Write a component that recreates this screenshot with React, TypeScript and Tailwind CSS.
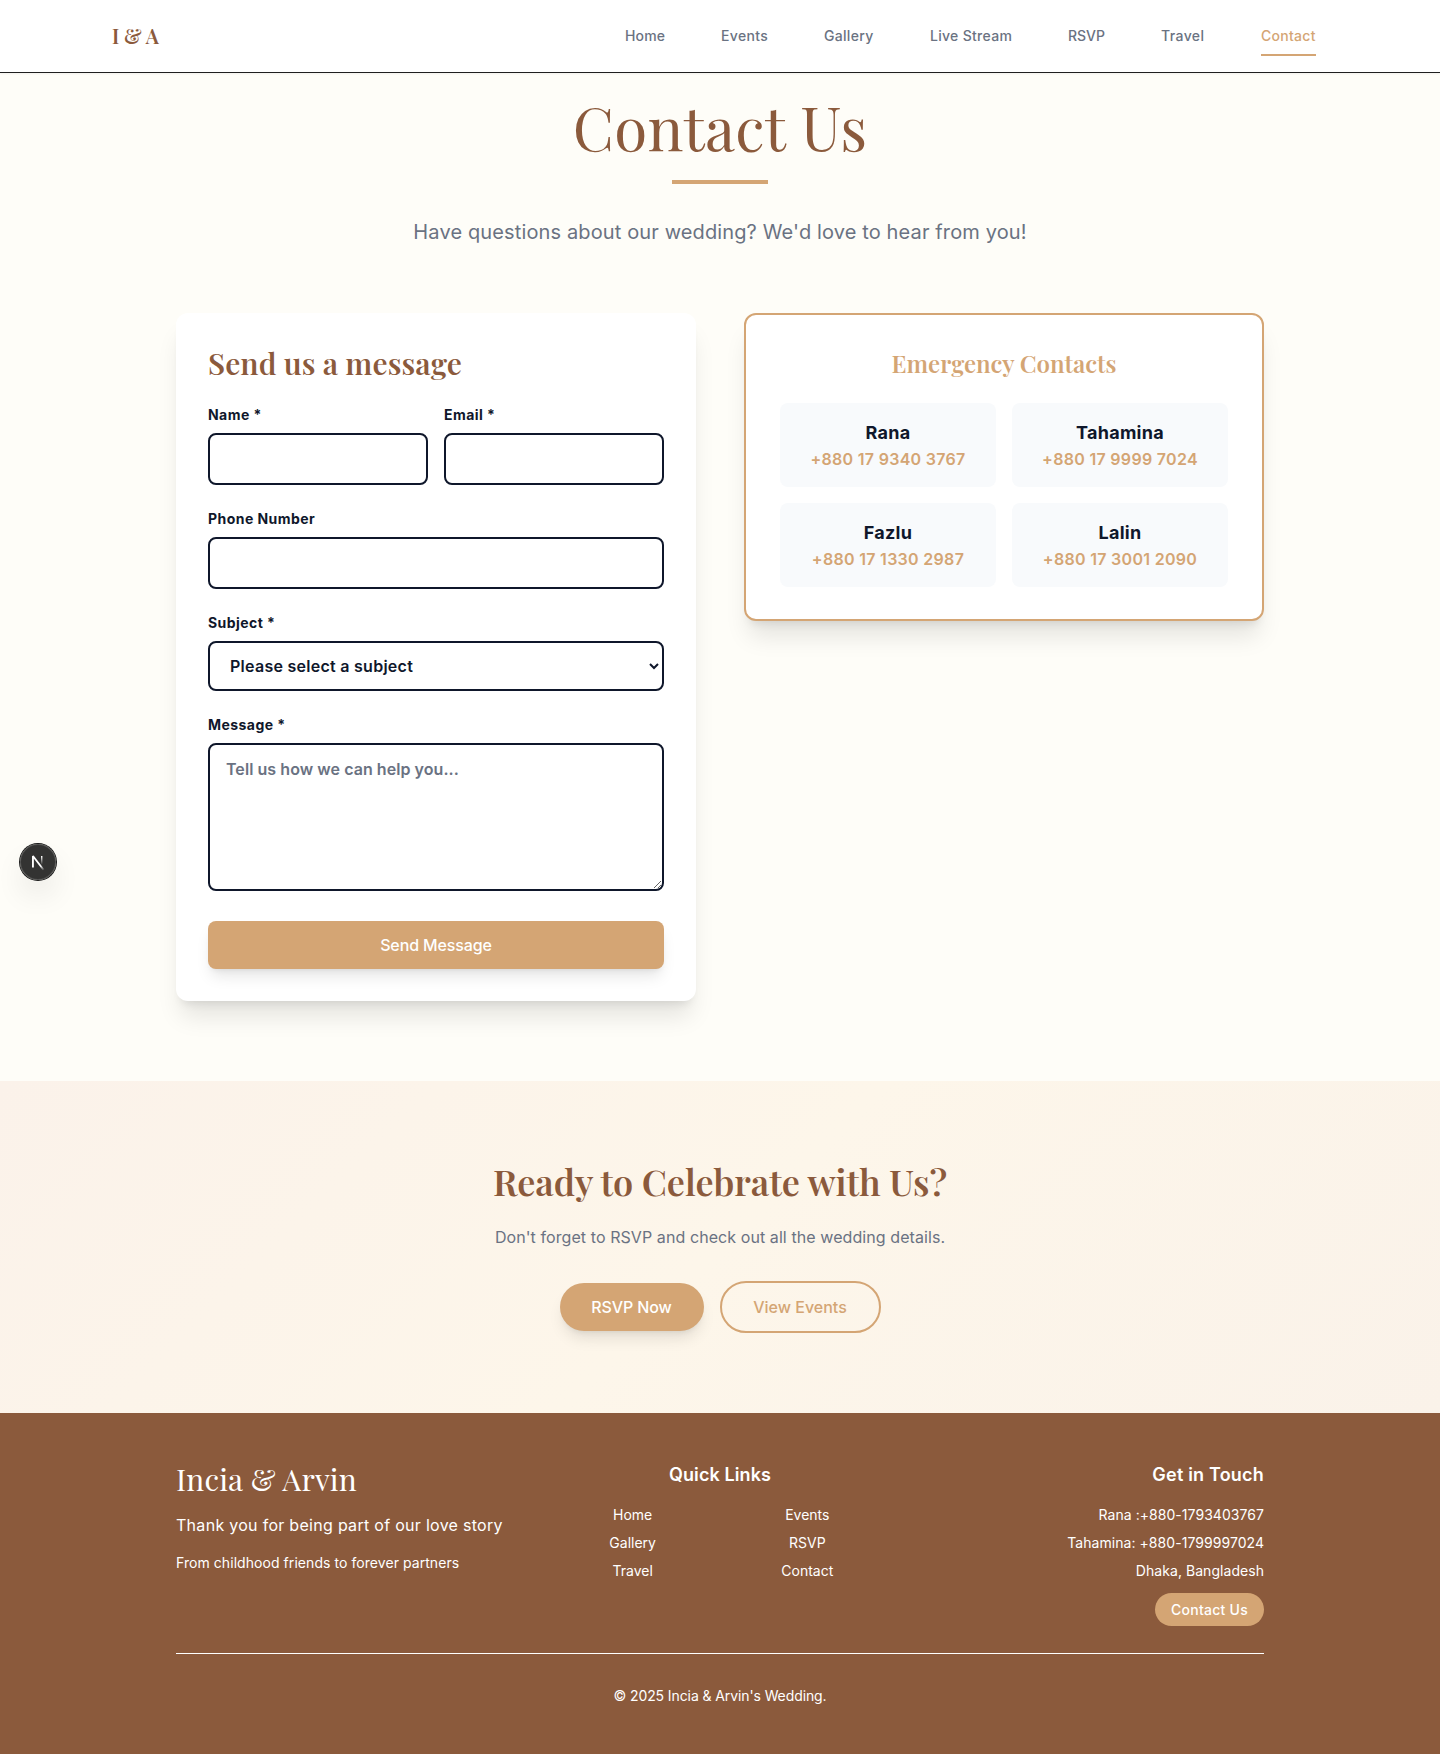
const serif = "font-['Playfair_Display',serif]";

const navItems = [
  { label: "Home", className: "w-10 tracking-[0.15px]" },
  { label: "Events", className: "w-[47px] tracking-[0.35px]" },
  { label: "Gallery", className: "w-[50px] tracking-[0.3px]" },
  { label: "Live Stream", className: "w-[82px] tracking-[0.3px]" },
  { label: "RSVP", className: "w-[37px]" },
  { label: "Travel", className: "w-11 tracking-[0.4px]" },
  { label: "Contact", className: "w-[55px] tracking-[0.28px]", active: true },
];

const contacts = [
  { name: "Rana", phone: "+880 17 9340 3767" },
  { name: "Tahamina", phone: "+880 17 9999 7024" },
  { name: "Fazlu", phone: "+880 17 1330 2987" },
  { name: "Lalin", phone: "+880 17 3001 2090" },
];

const quickLinks = ["Home", "Events", "Gallery", "RSVP", "Travel", "Contact"];

const labelClass = "mb-2 block text-sm font-bold tracking-[0.45px] text-slate-900";
const fieldClass =
  "block w-full rounded-lg border-2 border-slate-900 bg-white px-4 py-3 text-base font-semibold text-slate-900";

function Header() {
  return (
    <header className="relative h-[73px] border-b border-[#1f1f1f] bg-white shadow-[0_1px_2px_rgba(0,0,0,0.05)]">
      <div className="mx-auto flex h-full max-w-7xl items-center justify-between pl-8 pr-11">
        <a className={`${serif} text-xl font-semibold text-[#8B5A3C]`}>I &amp; A</a>
        <nav className="flex gap-14">
          {navItems.map((item) => (
            <a
              key={item.label}
              className={`border-y-2 border-t-transparent py-2 text-sm font-medium whitespace-nowrap ${item.className} ${
                item.active ? "border-b-[#D4A574] text-[#D4A574]" : "border-b-transparent text-gray-500"
              }`}
            >
              {item.label}
            </a>
          ))}
        </nav>
      </div>
    </header>
  );
}

function ContactForm() {
  return (
    <form className="rounded-xl bg-white p-8 shadow-xl">
      <h2 className={`${serif} mb-6 text-3xl font-semibold tracking-[0.1px] text-[#8B5A3C]`}>Send us a message</h2>
      <div className="space-y-6">
        <div className="grid grid-cols-2 gap-4">
          <div>
            <label className={labelClass}>Name *</label>
            <input className={fieldClass} type="text" />
          </div>
          <div>
            <label className={labelClass}>Email *</label>
            <input className={fieldClass} type="email" />
          </div>
        </div>
        <div>
          <label className={labelClass}>Phone Number</label>
          <input className={fieldClass} type="tel" />
        </div>
        <div>
          <label className={labelClass}>Subject *</label>
          <select className={`${fieldClass} h-[50px] tracking-[0.27px]`}>
            <option>Please select a subject</option>
          </select>
        </div>
        <div>
          <label className={labelClass}>Message *</label>
          <textarea
            className={`${fieldClass} h-[148px] resize-y tracking-[0.06px] placeholder:text-gray-500`}
            placeholder="Tell us how we can help you..."
          />
        </div>
      </div>
      <button
        type="button"
        className="mt-[30px] h-12 w-full rounded-lg bg-[#D4A574] text-base font-medium tracking-[-0.12px] text-white shadow-lg"
      >
        Send Message
      </button>
    </form>
  );
}

function EmergencyContacts() {
  return (
    <section className="self-start rounded-xl border-2 border-[#D4A574] bg-white p-8 text-center shadow-xl">
      <h3 className={`${serif} mb-6 text-2xl font-semibold text-[#D4A574]`}>Emergency Contacts</h3>
      <div className="mx-auto grid max-w-md grid-cols-2 gap-4">
        {contacts.map((contact) => (
          <div key={contact.name} className="rounded-lg bg-slate-50 p-4">
            <p className="text-lg font-bold tracking-[0.25px] text-slate-900">{contact.name}</p>
            <p className="text-base font-semibold tracking-[0.3px] text-[#D4A574]">{contact.phone}</p>
          </div>
        ))}
      </div>
    </section>
  );
}

function CallToAction() {
  return (
    <section className="bg-[linear-gradient(135deg,#fbf2ea,#fdf6ea_50%,#faf2e9)] py-20 text-center">
      <h2 className={`${serif} mb-6 text-4xl font-semibold tracking-[-0.05px] text-[#8B5A3C]`}>
        Ready to Celebrate with Us?
      </h2>
      <p className="mb-8 text-base tracking-[0.08px] text-gray-500">
        Don't forget to RSVP and check out all the wedding details.
      </p>
      <div className="flex items-center justify-center gap-4">
        <a className="w-36 rounded-full bg-[#D4A574] py-3 text-base font-medium tracking-[-0.12px] text-white shadow-lg">
          RSVP Now
        </a>
        <a className="w-[161px] rounded-full border-2 border-[#D4A574] py-3 text-base font-medium text-[#D4A574]">
          View Events
        </a>
      </div>
    </section>
  );
}

function Footer() {
  return (
    <footer className="bg-[#8B5A3C] py-12 text-white">
      <div className="mx-auto max-w-[1088px]">
        <div className="grid h-[192px] grid-cols-3 gap-8">
          <div>
            <p className={`${serif} mb-4 text-3xl tracking-[0.16px]`}>Incia &amp; Arvin</p>
            <p className="mb-4 text-base tracking-[0.29px] whitespace-nowrap">Thank you for being part of our love story</p>
            <p className="text-sm tracking-[0.06px]">From childhood friends to forever partners</p>
          </div>
          <div className="text-center">
            <h4 className="mb-4 text-lg font-semibold tracking-[0.1px]">Quick Links</h4>
            <div className="grid grid-cols-2 gap-2 text-sm">
              {quickLinks.map((link) => (
                <a key={link}>{link}</a>
              ))}
            </div>
          </div>
          <div className="flex flex-col items-end">
            <h4 className="mb-4 text-lg font-semibold tracking-[0.2px]">Get in Touch</h4>
            <div className="space-y-2 text-right text-sm tracking-[0.05px]">
              <p>Rana :+880-1793403767</p>
              <p>Tahamina: +880-1799997024</p>
              <p>Dhaka, Bangladesh</p>
            </div>
            <a className="mt-3 flex h-[33px] w-[109px] items-center justify-center rounded-full bg-[#D4A574] text-sm font-medium tracking-[0.27px]">
              Contact Us
            </a>
          </div>
        </div>
        <div className="border-t border-white pt-8 text-center text-sm">
          <p className="tracking-[-0.1px]">© 2025 Incia &amp; Arvin's Wedding.</p>
        </div>
      </div>
    </footer>
  );
}

function DevIndicator() {
  return (
    <div className="fixed top-[844px] left-5 size-9 rounded-full bg-black/80 shadow-[0_0_0_1px_#171717,inset_0_0_0_1px_rgba(255,255,255,0.14),0_16px_32px_-8px_rgba(0,0,0,0.24)]">
      <svg className="size-9" viewBox="1 1 36 36" fill="none">
        <defs>
          <linearGradient id="diag" x1="9.96" y1="11.12" x2="15.48" y2="17.97" gradientUnits="userSpaceOnUse">
            <stop stopColor="white" />
            <stop offset="0.6" stopColor="white" stopOpacity="0" />
          </linearGradient>
          <linearGradient id="stem" x1="11.82" y1="1.4" x2="11.79" y2="9.63" gradientUnits="userSpaceOnUse">
            <stop stopColor="white" />
            <stop offset="1" stopColor="white" stopOpacity="0" />
          </linearGradient>
        </defs>
        <g transform="translate(11.6 12)">
          <path d="M13.3 15.2L2.34 1V12.6" stroke="url(#diag)" strokeWidth="1.86" strokeLinejoin="bevel" />
          <path d="M11.12 1V12.6" stroke="url(#stem)" strokeWidth="1.4" />
        </g>
      </svg>
    </div>
  );
}

export default function App() {
  return (
    <div className="min-h-[1754px] bg-[#fefdf8] font-[Inter,sans-serif]">
      <Header />
      <main>
        <div className="pt-[23px] text-center">
          <h1 className={`${serif} text-6xl leading-none tracking-[0.3px] text-[#8B5A3C]`}>Contact Us</h1>
          <div className="mx-auto mt-6 h-1 w-24 bg-[#D4A574]" />
          <p className="mt-8 text-xl leading-[33px] tracking-[0.13px] text-gray-500">
            Have questions about our wedding? We'd love to hear from you!
          </p>
        </div>
        <div className="mx-auto mt-16 mb-20 grid max-w-[1088px] grid-cols-2 gap-12">
          <ContactForm />
          <EmergencyContacts />
        </div>
        <CallToAction />
      </main>
      <Footer />
      <DevIndicator />
    </div>
  );
}
